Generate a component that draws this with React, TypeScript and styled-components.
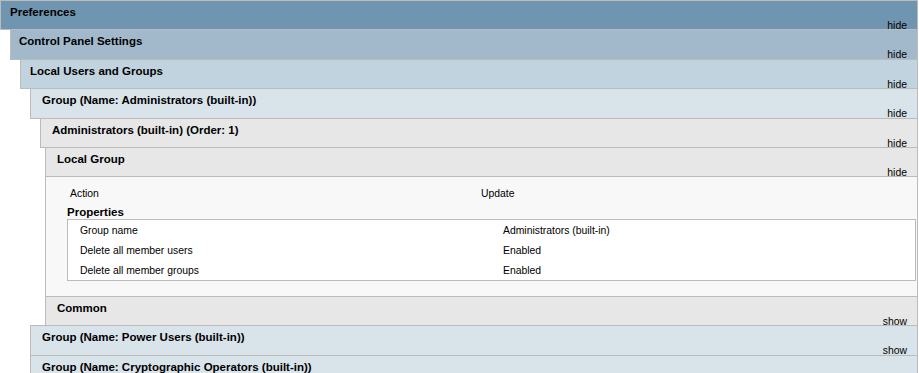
import React from "react";
import styled, { createGlobalStyle } from "styled-components";

const GlobalStyle = createGlobalStyle`
  html, body { margin: 0; padding: 0; background: #ffffff; }
  body {
    font-family: "Liberation Sans", Arial, sans-serif;
    color: #000000;
  }
`;

const Page = styled.div`
  width: 918px;
  padding-top: 1px;
`;

const Section = styled.div<{ $indent: number }>`
  margin-left: ${(p) => p.$indent}px;
`;

const Header = styled.div<{ $bg: string; $pad: number }>`
  box-sizing: border-box;
  height: 30.4px;
  margin-top: -1px;
  border: 1px solid #bbbbbb;
  background: ${(p) => p.$bg};
  padding: 4px 10px 0 ${(p) => p.$pad}px;
  display: grid;
  grid-template-columns: 1fr auto;
  grid-template-rows: 14px 13px;
`;

const Title = styled.span`
  grid-column: 1 / span 2;
  grid-row: 1;
  font-size: 11.5px;
  line-height: 14px;
  font-weight: bold;
  white-space: nowrap;
`;

const Toggle = styled.span`
  grid-column: 2;
  grid-row: 2;
  font-size: 10.4px;
  line-height: 13px;
  cursor: pointer;
`;

const Content = styled.div`
  box-sizing: border-box;
  border-left: 1px solid #bbbbbb;
  border-right: 1px solid #bbbbbb;
  background: #f8f8f8;
  padding: 10px 0 15.6px 0;
`;

const ActionRow = styled.div`
  display: grid;
  grid-template-columns: 411px 1fr;
  padding-left: 24px;
  font-size: 10.4px;
  line-height: 14px;
`;

const SubTitle = styled.div`
  margin-top: 4px;
  padding-left: 21px;
  font-size: 11.5px;
  line-height: 14px;
  font-weight: bold;
`;

const PropTable = styled.div`
  margin: 0 1px 0 21px;
  border: 1px solid #bbbbbb;
  background: #ffffff;
`;

const PropRow = styled.div`
  box-sizing: border-box;
  display: grid;
  grid-template-columns: 423px 1fr;
  padding: 4px 0 2px 12px;
  height: 20px;
  font-size: 10.4px;
  line-height: 14px;
`;

type Node = {
  title: string;
  open: boolean;
  children?: Node[];
  content?: boolean;
};

const levels = [
  { indent: 0, bg: "#6f95b0", pad: 9 },
  { indent: 10, bg: "#a1b9cb", pad: 8 },
  { indent: 10, bg: "#c1d3de", pad: 9 },
  { indent: 10, bg: "#d9e3ea", pad: 11 },
  { indent: 10, bg: "#e7e7e7", pad: 11 },
  { indent: 5, bg: "#e7e7e7", pad: 11 },
];

const tree: Node = {
  title: "Preferences",
  open: true,
  children: [
    {
      title: "Control Panel Settings",
      open: true,
      children: [
        {
          title: "Local Users and Groups",
          open: true,
          children: [
            {
              title: "Group (Name: Administrators (built-in))",
              open: true,
              children: [
                {
                  title: "Administrators (built-in) (Order: 1)",
                  open: true,
                  children: [
                    { title: "Local Group", open: true, content: true },
                    { title: "Common", open: false },
                  ],
                },
              ],
            },
            { title: "Group (Name: Power Users (built-in))", open: false },
            { title: "Group (Name: Cryptographic Operators (built-in))", open: false },
          ],
        },
      ],
    },
  ],
};

const properties = [
  ["Group name", "Administrators (built-in)"],
  ["Delete all member users", "Enabled"],
  ["Delete all member groups", "Enabled"],
];

function LocalGroupContent() {
  return (
    <Content>
      <ActionRow>
        <span>Action</span>
        <span>Update</span>
      </ActionRow>
      <SubTitle>Properties</SubTitle>
      <PropTable>
        {properties.map(([k, v]) => (
          <PropRow key={k}>
            <span>{k}</span>
            <span>{v}</span>
          </PropRow>
        ))}
      </PropTable>
    </Content>
  );
}

function Tree({ node, level }: { node: Node; level: number }) {
  const l = levels[level];
  return (
    <Section $indent={l.indent}>
      <Header $bg={l.bg} $pad={l.pad}>
        <Title>{node.title}</Title>
        <Toggle>{node.open ? "hide" : "show"}</Toggle>
      </Header>
      {node.open && node.content && <LocalGroupContent />}
      {node.open &&
        node.children?.map((c) => <Tree key={c.title} node={c} level={level + 1} />)}
    </Section>
  );
}

export default function App() {
  return (
    <>
      <GlobalStyle />
      <Page>
        <Tree node={tree} level={0} />
      </Page>
    </>
  );
}
